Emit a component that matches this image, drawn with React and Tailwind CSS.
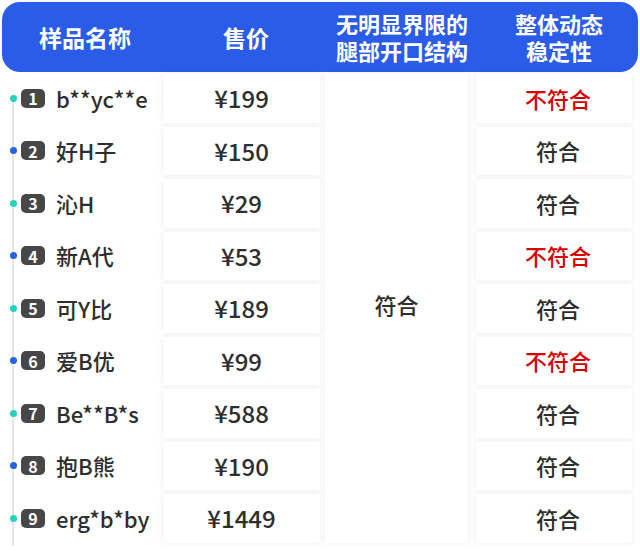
import React from 'react';

const rows = [
  { no: 1, name: 'b**yc**e', price: '¥199', ok: false, dot: 'teal' },
  { no: 2, name: '好H子', price: '¥150', ok: true, dot: 'blue' },
  { no: 3, name: '沁H', price: '¥29', ok: true, dot: 'teal' },
  { no: 4, name: '新A代', price: '¥53', ok: false, dot: 'blue' },
  { no: 5, name: '可Y比', price: '¥189', ok: true, dot: 'teal' },
  { no: 6, name: '爱B优', price: '¥99', ok: false, dot: 'blue' },
  { no: 7, name: 'Be**B*s', price: '¥588', ok: true, dot: 'teal' },
  { no: 8, name: '抱B熊', price: '¥190', ok: true, dot: 'blue' },
  { no: 9, name: 'erg*b*by', price: '¥1449', ok: true, dot: 'teal' },
];

const font = { fontFamily: '"Noto Sans CJK SC", "Noto Sans", sans-serif' };

const App = () => {
  return (
    <div className="w-[640px] h-[551px] bg-white overflow-hidden pt-[2px]" style={font}>
      {/* header */}
      <div className="mx-[2px] h-[70px] rounded-[18px] bg-[#2a5ce8] text-white font-bold text-[22px] leading-[27px] grid grid-cols-[162px_160px_150px_1fr] items-center">
        <div className="text-center pl-[4px] text-[23px]">样品名称</div>
        <div className="text-center pl-[4px] text-[23px]">售价</div>
        <div className="text-center pl-[6px]">无明显界限的<br />腿部开口结构</div>
        <div className="text-center pl-[6px]">整体动态<br />稳定性</div>
      </div>

      {/* body */}
      <div className="relative mt-[2px] grid grid-cols-[163px_157px_148px_164px] h-[468px]">
        <div className="absolute left-[12px] top-[22px] bottom-[-4px] w-[2px] bg-[#e6e6e6]" />

        <div className="flex flex-col gap-[4px]">
          {rows.map(r => (
            <div key={r.no} className="relative h-[48.5px] flex items-center">
              <span className={`absolute left-[10px] w-[7px] h-[7px] rounded-full ${r.dot === 'teal' ? 'bg-[#22d3c0]' : 'bg-[#2563eb]'}`} />
              <span className="ml-[21px] shrink-0 w-[24px] h-[19px] rounded-[5px] bg-[#474747] text-white text-[16px] font-bold flex items-center justify-center leading-none">{r.no}</span>
              <span className="ml-[11px] text-[22px] font-medium text-[#2e2e2e] whitespace-nowrap">{r.name}</span>
            </div>
          ))}
        </div>

        <div className="flex flex-col gap-[4px]">
          {rows.map(r => (
            <div key={r.no} className="h-[48.5px] bg-white shadow-[0_0_6px_rgba(0,0,0,0.07)] flex items-center justify-center text-[24px] font-medium text-[#2e2e2e]">
              {r.price}
            </div>
          ))}
        </div>

        <div className="ml-[5px] pb-[8px] bg-white shadow-[0_0_6px_rgba(0,0,0,0.07)] flex items-center justify-center text-[22px] font-medium text-[#2e2e2e]">
          符合
        </div>

        <div className="ml-[8px] flex flex-col gap-[4px]">
          {rows.map(r => (
            <div key={r.no} className={`h-[48.5px] bg-white shadow-[0_0_6px_rgba(0,0,0,0.07)] flex items-center justify-center pl-[8px] text-[22px] font-medium ${r.ok ? 'text-[#2e2e2e]' : 'text-[#d60000]'}`}>
              {r.ok ? '符合' : '不符合'}
            </div>
          ))}
        </div>
      </div>
    </div>
  );
};

export default App;
